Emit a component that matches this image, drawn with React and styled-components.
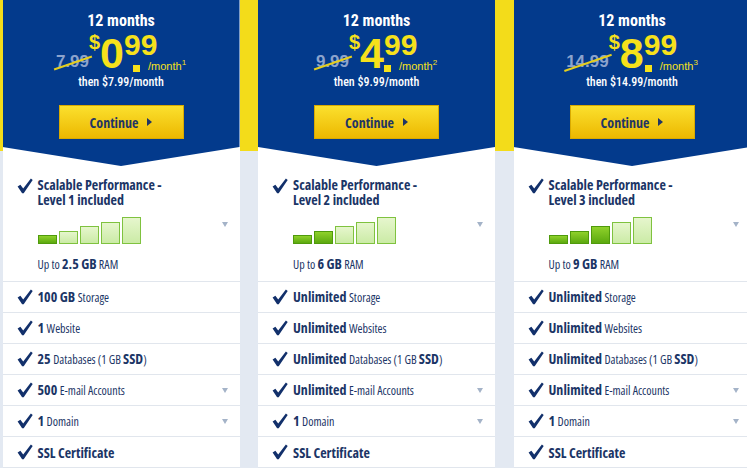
import React from "react";
import styled, { createGlobalStyle } from "styled-components";

const Global = createGlobalStyle`
  body {
    margin: 0;
    overflow: hidden;
    background: #e3e9f2;
  }
`;

const Page = styled.div`
  display: grid;
  grid-template-columns: repeat(3, 237px);
  column-gap: 18.5px;
  padding-left: 2.5px;
  width: 760px;
  height: 468px;
  background: linear-gradient(#f3dc1a 0, #f3dc1a 151px, #e3e9f2 151px);
`;

const Card = styled.div`
  display: flex;
  flex-direction: column;
  background: #fff;
`;

const Header = styled.div`
  box-sizing: border-box;
  height: 166px;
  padding-top: 12px;
  background: #033a8c;
  text-align: center;
  clip-path: polygon(0 0, 100% 0, 100% 147px, 50% 166px, 0 147px);
`;

const Term = styled.div`
  font-family: Roboto, "Liberation Sans", sans-serif;
  font-stretch: 75%;
  font-weight: 700;
  font-size: 16px;
  line-height: 18px;
  color: #fff;
`;

const PriceRow = styled.div`
  display: flex;
  justify-content: center;
  align-items: flex-start;
  height: 45px;
  color: #f6e11b;
  font-family: "Liberation Sans", Arial, sans-serif;
  font-weight: 700;
`;

const OldPrice = styled.span`
  position: relative;
  margin-top: 23px;
  font-size: 17px;
  line-height: 1;
  color: #8ca3cd;

  &::after {
    content: "";
    position: absolute;
    left: -3px;
    right: -4px;
    top: 52%;
    height: 2px;
    background: #e4ce1e;
    transform: rotate(-19deg);
  }
`;

const Dollar = styled.span`
  margin-top: 2px;
  font-size: 20px;
  line-height: 1;
`;

const Whole = styled.span`
  margin-top: 2px;
  font-size: 43px;
  line-height: 1;
`;

const CentsCol = styled.div`
  display: flex;
  flex-direction: column;
  align-items: flex-start;
`;

const Cents = styled.span`
  font-size: 30px;
  line-height: 1;
`;

const DotRow = styled.div`
  display: flex;
  align-items: flex-end;
  margin-top: 1px;
`;

const Dot = styled.span`
  width: 7px;
  height: 7px;
  margin-left: ${(p) => p.$offset}px;
  background: #f6e11b;
`;

const Per = styled.span`
  margin-left: 8px;
  font-size: 11px;
  font-weight: 400;
  line-height: 1;

  sup {
    font-size: 8px;
    line-height: 0;
  }
`;

const Then = styled.div`
  font-family: Roboto, "Liberation Sans", sans-serif;
  font-stretch: 75%;
  font-weight: 500;
  font-size: 12px;
  line-height: 14px;
  color: #fff;
`;

const Button = styled.button`
  display: flex;
  align-items: center;
  justify-content: center;
  gap: 9px;
  box-sizing: border-box;
  width: 125px;
  height: 34px;
  margin: 16px auto 0;
  padding: 0;
  border: 1px solid #d9aa00;
  background: linear-gradient(#fbe02e, #ecb800);
  font-family: "Open Sans", sans-serif;
  font-stretch: 75%;
  font-weight: 700;
  font-size: 14px;
  color: #1f3564;
  cursor: pointer;
`;

const Arrow = styled.span`
  width: 0;
  height: 0;
  border-top: 4px solid transparent;
  border-bottom: 4px solid transparent;
  border-left: 5px solid #1f3564;
`;

const Body = styled.div`
  font-family: "Open Sans", sans-serif;
  font-stretch: 75%;
  color: #1b3566;
`;

const Perf = styled.div`
  display: flex;
  align-items: flex-start;
  padding: 11px 12px 9px 14px;
`;

const Check = styled.svg`
  flex: none;
  width: 16px;
  height: 16px;
  margin-right: 5px;
  margin-top: ${(p) => p.$top || 0}px;
`;

const PerfInfo = styled.div`
  flex: 1;
`;

const Strong = styled.div`
  font-weight: 700;
  font-size: 14px;
  line-height: 15px;
`;

const Line = styled.span`
  display: block;
  height: 15px;
`;

const Regular = styled.span`
  font-weight: 400;
  font-size: 12px;
`;

const Chart = styled.div`
  display: flex;
  align-items: flex-end;
  gap: 2px;
  height: 27px;
  margin-top: 10px;
`;

const Bar = styled.div`
  box-sizing: border-box;
  width: 19px;
  border: 1px solid ${(p) => (p.$on ? "#4f9a0c" : "#7fc23f")};
  background: ${(p) =>
    p.$on
      ? "linear-gradient(#8fd12b, #5ca90f)"
      : "linear-gradient(#e6f6cd, #cbeba6)"};
`;

const Ram = styled(Strong)`
  margin-top: 12px;
`;

const Caret = styled.span`
  flex: none;
  width: 0;
  height: 0;
  margin-left: auto;
  align-self: center;
  border-left: 3.5px solid transparent;
  border-right: 3.5px solid transparent;
  border-top: 5px solid #a4b3c8;
`;

const Row = styled.div`
  display: flex;
  align-items: center;
  box-sizing: border-box;
  height: 31px;
  padding: 0 12px 0 14px;
  border-top: 1px solid #e1e6ed;

  &:last-child {
    height: 32px;
    border-bottom: 1px solid #e1e6ed;
  }
`;

const RowText = styled(Strong)`
  flex: 1;
`;

const Tick = ({ top }) => (
  <Check viewBox="0 0 16 16" $top={top}>
    <path
      d="M0.6 8.4 L3.4 6.7 L6.2 10.6 L13.9 0.6 L15.7 2 L6.7 15.2 L5.1 15.2 Z"
      fill="#12306b"
    />
  </Check>
);

const plans = [
  {
    old: "7.99",
    whole: "0",
    note: "1",
    dot: 9,
    then: "$7.99",
    level: 1,
    ram: "2.5 GB",
    storage: "100 GB",
    sites: "1",
    siteLabel: "Website",
    db: "25",
    mail: "500",
  },
  {
    old: "9.99",
    whole: "4",
    note: "2",
    dot: 0,
    then: "$9.99",
    level: 2,
    ram: "6 GB",
    storage: "Unlimited",
    sites: "Unlimited",
    siteLabel: "Websites",
    db: "Unlimited",
    mail: "Unlimited",
  },
  {
    old: "14.99",
    whole: "8",
    note: "3",
    dot: 1,
    then: "$14.99",
    level: 3,
    ram: "9 GB",
    storage: "Unlimited",
    sites: "Unlimited",
    siteLabel: "Websites",
    db: "Unlimited",
    mail: "Unlimited",
  },
];

const barHeights = [9, 13, 18, 22, 27];

const PlanCard = ({ plan }) => (
  <Card>
    <Header>
      <Term>12 months</Term>
      <PriceRow>
        <OldPrice>{plan.old}</OldPrice>
        <Dollar>$</Dollar>
        <Whole>{plan.whole}</Whole>
        <CentsCol>
          <Cents>99</Cents>
          <DotRow>
            <Dot $offset={plan.dot} />
            <Per>
              /month<sup>{plan.note}</sup>
            </Per>
          </DotRow>
        </CentsCol>
      </PriceRow>
      <Then>then {plan.then}/month</Then>
      <Button>
        Continue
        <Arrow />
      </Button>
    </Header>

    <Body>
      <Perf>
        <Tick top={1} />
        <PerfInfo>
          <Strong>
            <Line>Scalable Performance -</Line>
            <Line>Level {plan.level} included</Line>
          </Strong>
          <Chart>
            {barHeights.map((h, i) => (
              <Bar key={i} $on={i < plan.level} style={{ height: h }} />
            ))}
          </Chart>
          <Ram>
            <Regular>Up to </Regular>
            {plan.ram}
            <Regular> RAM</Regular>
          </Ram>
        </PerfInfo>
        <Caret />
      </Perf>

      <Row>
        <Tick />
        <RowText>
          {plan.storage} <Regular>Storage</Regular>
        </RowText>
      </Row>
      <Row>
        <Tick />
        <RowText>
          {plan.sites} <Regular>{plan.siteLabel}</Regular>
        </RowText>
      </Row>
      <Row>
        <Tick />
        <RowText>
          {plan.db} <Regular>Databases (1 GB </Regular>SSD
          <Regular>)</Regular>
        </RowText>
      </Row>
      <Row>
        <Tick />
        <RowText>
          {plan.mail} <Regular>E-mail Accounts</Regular>
        </RowText>
        <Caret />
      </Row>
      <Row>
        <Tick />
        <RowText>
          1 <Regular>Domain</Regular>
        </RowText>
        <Caret />
      </Row>
      <Row>
        <Tick />
        <RowText>SSL Certificate</RowText>
      </Row>
    </Body>
  </Card>
);

export default function App() {
  return (
    <>
      <Global />
      <Page>
        {plans.map((p) => (
          <PlanCard key={p.old} plan={p} />
        ))}
      </Page>
    </>
  );
}
